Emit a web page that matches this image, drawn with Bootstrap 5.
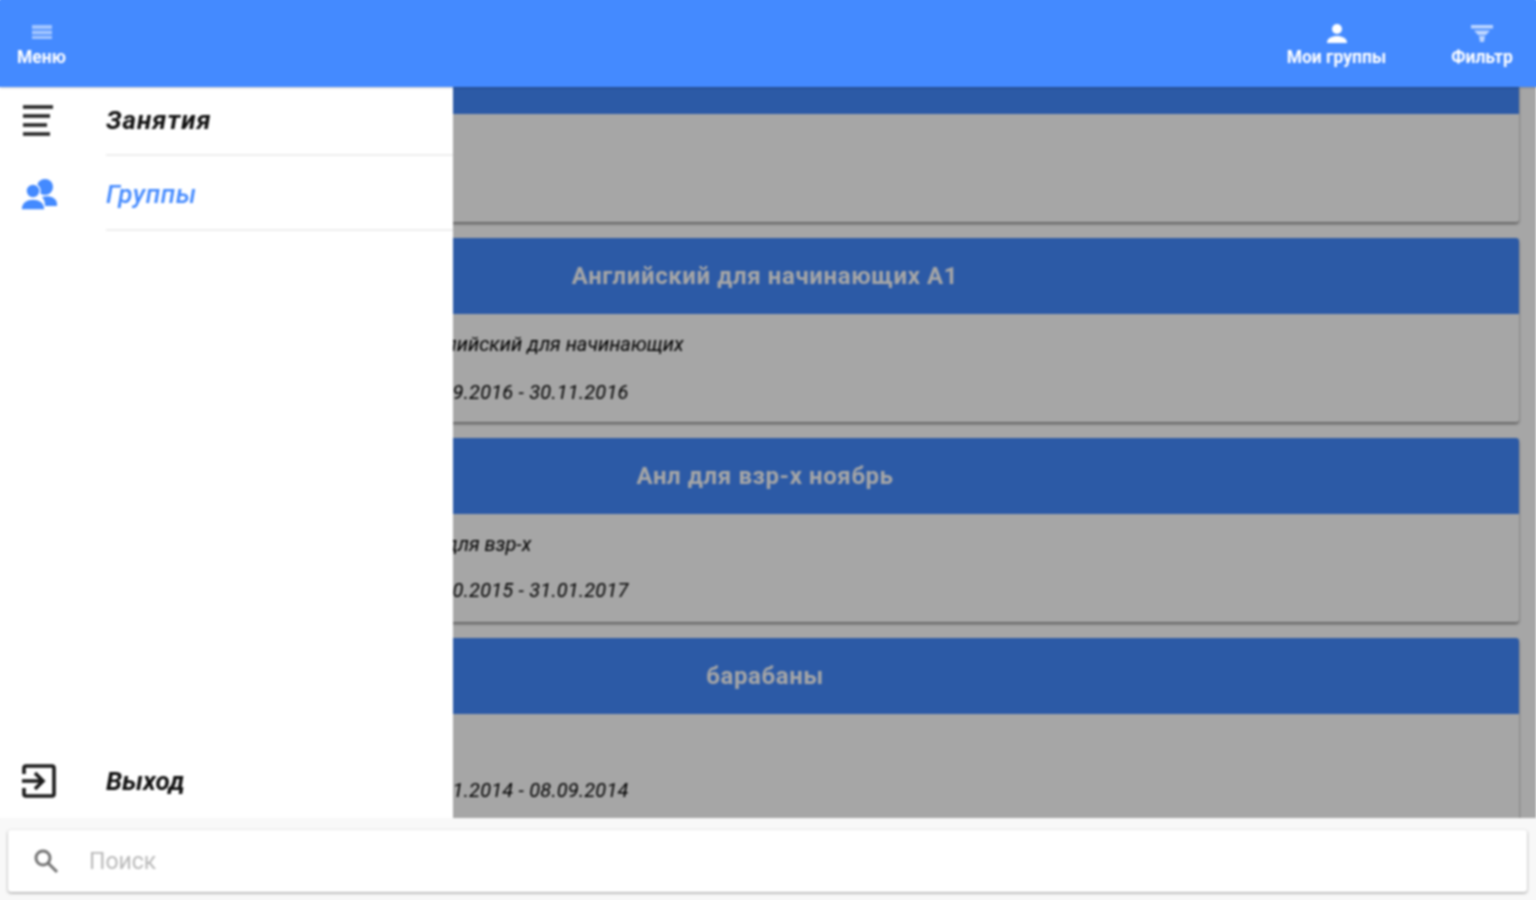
<!DOCTYPE html>
<html lang="ru">
<head>
<meta charset="utf-8">
<title>Группы</title>
<link href="https://cdn.jsdelivr.net/npm/bootstrap@5.3.0/dist/css/bootstrap.min.css" rel="stylesheet">
<style>
html,body{height:100%;overflow:hidden;background:#fff}
body{font-family:Roboto,"Liberation Sans",sans-serif}
.app-frame{height:900px;filter:blur(1px)}
.top-bar{flex:none;height:87px;background:#448aff;padding:0;z-index:5;box-shadow:0 -6px 0 #448aff,-6px 0 0 #448aff,6px 0 0 #448aff,0 1px 2px rgba(0,0,0,.2);align-items:stretch}
.bar-btn{display:flex;flex-direction:column;align-items:center;color:#fff;font-size:17.5px;font-weight:700;line-height:20px;padding-top:22px;gap:3px}
.bar-btn svg{display:block;width:24px;height:22px;fill:#fff}
.bar-menu{margin-left:17px;width:49px}
.bar-groups{margin-right:64px;width:101px}
.bar-filter{margin-right:23px;width:62px}
.stage{overflow:hidden;min-height:0}
.sheet-list{margin-top:-49px;padding:0 17px 0 11px}
.group-card{height:184px;margin-bottom:16px;border:0;border-radius:3px;background:#fff;box-shadow:0 2px 3px rgba(0,0,0,.45)}
.group-head{height:76px;background:#448aff;color:#fff;font-size:24px;font-weight:700;border:0;letter-spacing:.6px;display:flex;align-items:center;justify-content:center;border-radius:3px 3px 0 0!important}
.group-text{padding:0 0 0 403px;font-style:italic;font-size:20px;line-height:24px;color:#000}
.line-one{margin-top:18px;height:24px}
.line-two{margin-top:24px;letter-spacing:.2px}
.line-close{margin-top:22px}
.line-tight{margin-left:-8px}
.dim-layer{position:absolute;inset:0;background:rgba(0,0,0,.35);z-index:2}
.side-sheet{position:absolute;left:0;top:0;bottom:0;width:453px;background:#fff;z-index:3}
.side-item{display:flex;align-items:center;height:75px;padding:0;border:0;font-size:26px;font-weight:700;font-style:italic;color:#111;background:transparent}
.side-ico{width:106px;flex:none;padding-left:20px;display:flex}
.side-label{flex:1;height:100%;display:flex;align-items:center;border-bottom:2px solid #eee}
.side-first{height:69px;letter-spacing:1px}
.side-first .side-ico{padding-bottom:4px}
.side-last .side-label{border:0}
.side-active{color:#448aff;font-weight:500;letter-spacing:.6px}
.side-active .side-ico,.side-active .side-label{padding-top:3px}
.side-last{height:74px}
.search-zone{flex:none;height:82px;background:#f8f8f8;padding:12px 9px 8px 8px;z-index:5;box-shadow:0 6px 0 #f8f8f8,-6px 0 0 #f8f8f8,6px 0 0 #f8f8f8}
.search-box{height:62px;background:#fff;border-radius:3px;box-shadow:0 1px 3px rgba(0,0,0,.4)}
.search-ico{width:81px;flex:none;padding-left:24px;display:flex}
.search-input{border:0;padding:0;font-size:23px;color:#333;background:transparent;height:100%;box-shadow:none}
.search-input::placeholder{color:#b9b9b9}
</style>
</head>
<body>
<div class="app-frame d-flex flex-column">
  <nav class="navbar top-bar flex-nowrap justify-content-between">
    <div class="bar-btn bar-menu">
      <svg viewBox="0 0 24 22"><path d="M2 3h20v4H2zM2 8.500h20v4H2zM2 14h20v3H2z" opacity=".5"/></svg>
      <span>Меню</span>
    </div>
    <div class="d-flex">
      <div class="bar-btn bar-groups">
        <svg viewBox="0 0 24 22"><circle cx="12" cy="7" r="5"/><path d="M2 21c0-5 5-7 10-7s10 2 10 7z"/></svg>
        <span>Мои группы</span>
      </div>
      <div class="bar-btn bar-filter">
        <svg viewBox="0 0 24 22"><path d="M1 3h22v3.500H1zM4 8.500h16L16 13H8zM9 14h6l-1 6h-4z" opacity=".65"/></svg>
        <span>Фильтр</span>
      </div>
    </div>
  </nav>

  <main class="stage flex-grow-1 position-relative">
    <div class="sheet-list">
      <div class="card group-card">
        <div class="card-header group-head">&nbsp;</div>
        <div class="card-body group-text"></div>
      </div>
      <div class="card group-card">
        <div class="card-header group-head">Английский для начинающих А1</div>
        <div class="card-body group-text">
          <div class="line-one">Английский для начинающих</div>
          <div class="line-two">01.09.2016 - 30.11.2016</div>
        </div>
      </div>
      <div class="card group-card">
        <div class="card-header group-head">Анл для взр-х ноябрь</div>
        <div class="card-body group-text">
          <div class="line-one line-tight">Анл для взр-х</div>
          <div class="line-two line-close">01.10.2015 - 31.01.2017</div>
        </div>
      </div>
      <div class="card group-card">
        <div class="card-header group-head">барабаны</div>
        <div class="card-body group-text">
          <div class="line-one"></div>
          <div class="line-two line-close">01.01.2014 - 08.09.2014</div>
        </div>
      </div>
    </div>
    <div class="dim-layer"></div>
    <aside class="side-sheet d-flex flex-column">
      <div class="list-group list-group-flush">
        <div class="list-group-item side-item side-first">
          <span class="side-ico"><svg width="36" height="36" viewBox="0 0 36 36" fill="none" stroke="#222" stroke-width="3.600"><path d="M3 5h30M3 14h27M3 23h24M3 32h27"/></svg></span>
          <span class="side-label">Занятия</span>
        </div>
        <div class="list-group-item side-item side-active">
          <span class="side-ico"><svg width="38" height="36" viewBox="0 0 38 36" fill="#448aff"><circle cx="25" cy="10" r="8"/><path d="M22 20c6-2 15 0 15 7v2H25c0-4-1-7-3-9z"/><circle cx="13" cy="14" r="7" stroke="#fff" stroke-width="1.500"/><path d="M1 33c0-8 6-11 12-11s12 3 12 11z" stroke="#fff" stroke-width="1.500"/></svg></span>
          <span class="side-label">Группы</span>
        </div>
      </div>
      <div class="list-group list-group-flush mt-auto">
        <div class="list-group-item side-item side-last">
          <span class="side-ico ps-3"><svg width="44" height="36" viewBox="0 0 44 36" fill="none" stroke="#1a1a1a" stroke-width="3.600"><path d="M8 11V5a2 2 0 0 1 2-2h26a2 2 0 0 1 2 2v26a2 2 0 0 1-2 2H10a2 2 0 0 1-2-2v-6"/><path d="M6 18h21M19 10l8 8-8 8"/></svg></span>
          <span class="side-label">Выход</span>
        </div>
      </div>
    </aside>
  </main>

  <div class="search-zone">
    <div class="search-box d-flex align-items-center">
      <span class="search-ico"><svg width="28" height="28" viewBox="0 0 28 28" fill="none" stroke="#757575" stroke-width="3"><circle cx="11" cy="11" r="7"/><path d="M16 16l9 9"/></svg></span>
      <input class="form-control search-input" type="text" placeholder="Поиск">
    </div>
  </div>
</div>
<script src="https://cdn.jsdelivr.net/npm/bootstrap@5.3.0/dist/js/bootstrap.bundle.min.js"></script>
</body>
</html>
